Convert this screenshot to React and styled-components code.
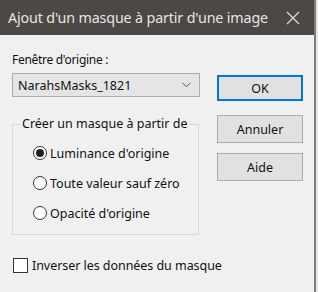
import React from "react";
import styled, { createGlobalStyle } from "styled-components";

const Global = createGlobalStyle`
  html, body { margin: 0; padding: 0; background: #e6e6e6; }
  body { font-family: "Noto Sans", "Open Sans", sans-serif; }
`;

const Window = styled.div`
  width: 314px;
  height: 292px;
  background: #f0f0f0;
  border-right: 2px solid #7d7d7d;
  display: flex;
  flex-direction: column;
  overflow: hidden;
`;

const TitleBar = styled.div`
  height: 35px;
  flex: none;
  background: #4b4845;
  color: #e6e6e6;
  display: flex;
  align-items: center;
  justify-content: space-between;
  padding: 0 14px 0 8px;
  font-size: 14.3px;
  letter-spacing: -0.15px;
`;

const CloseIcon = () => (
  <svg width="14" height="14" viewBox="0 0 14 14">
    <path d="M1 1 L13 13 M13 1 L1 13" stroke="#e0e0e0" strokeWidth="1.2" fill="none" />
  </svg>
);

const Content = styled.div`
  display: flex;
  flex-direction: column;
  padding: 17px 0 0 12px;
  font-size: 12px;
  color: #111;
`;

const TopRow = styled.div`
  display: flex;
  gap: 17px;
`;

const LeftCol = styled.div`
  width: 188px;
  display: flex;
  flex-direction: column;
`;

const Label = styled.div`
  height: 16px;
  line-height: 16px;
  font-size: 12px;
  letter-spacing: -0.3px;
`;

const Select = styled.div`
  margin-top: 5px;
  height: 24px;
  box-sizing: border-box;
  border: 1px solid #adadad;
  background: #e5e5e5;
  display: flex;
  align-items: center;
  justify-content: space-between;
  padding: 0 8px 0 5px;
  font-size: 12.5px;
`;

const Chevron = () => (
  <svg width="9" height="6" viewBox="0 0 9 6">
    <path d="M0.5 0.8 L4.5 4.8 L8.5 0.8" stroke="#555" strokeWidth="1" fill="none" />
  </svg>
);

const Group = styled.fieldset`
  margin: 19px 0 0 0;
  width: 187px;
  box-sizing: border-box;
  border: 1px solid #d9d9d9;
  padding: 0 0 6px 7px;
  min-width: 0;
`;

const Legend = styled.legend`
  padding: 0 2px;
  height: 16px;
  line-height: 16px;
  font-size: 12.5px;
`;

const Radios = styled.div`
  display: flex;
  flex-direction: column;
  padding-top: 6px;
`;

const RadioRow = styled.div`
  height: 30px;
  display: flex;
  align-items: center;
  gap: 3px;
  padding-left: 13px;
  font-size: 12.5px;
`;

const RadioCircle = styled.span`
  width: 14px;
  height: 14px;
  box-sizing: border-box;
  border-radius: 50%;
  border: 1px solid #333;
  background: #fff;
  display: flex;
  align-items: center;
  justify-content: center;
  &::after {
    content: "";
    width: 8px;
    height: 8px;
    border-radius: 50%;
    background: ${(p) => (p.$checked ? "#222" : "transparent")};
  }
`;

const RightCol = styled.div`
  display: flex;
  flex-direction: column;
  width: 86px;
`;

const Button = styled.div`
  margin-top: ${(p) => p.$mt}px;
  height: ${(p) => p.$h}px;
  box-sizing: border-box;
  border: ${(p) => (p.$primary ? "2px solid #0078d7" : "1px solid #adadad")};
  background: #e1e1e1;
  display: flex;
  align-items: center;
  justify-content: center;
  font-size: 12.5px;
`;

const CheckRow = styled.div`
  margin-top: 23px;
  display: flex;
  align-items: center;
  gap: 4px;
  height: 15px;
  padding-left: 1px;
  font-size: 12.5px;
  letter-spacing: -0.05px;
`;

const CheckBox = styled.span`
  width: 15px;
  height: 15px;
  box-sizing: border-box;
  border: 1px solid #333;
  background: #fff;
`;

export default function App() {
  return (
    <>
      <Global />
      <Window>
        <TitleBar>
          <span>Ajout d'un masque à partir d'une image</span>
          <CloseIcon />
        </TitleBar>
        <Content>
          <TopRow>
            <LeftCol>
              <Label>Fenêtre d'origine :</Label>
              <Select>
                <span>NarahsMasks_1821</span>
                <Chevron />
              </Select>
              <Group>
                <Legend>Créer un masque à partir de</Legend>
                <Radios>
                  <RadioRow>
                    <RadioCircle $checked />
                    <span>Luminance d'origine</span>
                  </RadioRow>
                  <RadioRow>
                    <RadioCircle />
                    <span>Toute valeur sauf zéro</span>
                  </RadioRow>
                  <RadioRow>
                    <RadioCircle />
                    <span>Opacité d'origine</span>
                  </RadioRow>
                </Radios>
              </Group>
            </LeftCol>
            <RightCol>
              <Button $primary $mt={23} $h={26}>OK</Button>
              <Button $mt={14} $h={28}>Annuler</Button>
              <Button $mt={10} $h={28}>Aide</Button>
            </RightCol>
          </TopRow>
          <CheckRow>
            <CheckBox />
            <span>Inverser les données du masque</span>
          </CheckRow>
        </Content>
      </Window>
    </>
  );
}
